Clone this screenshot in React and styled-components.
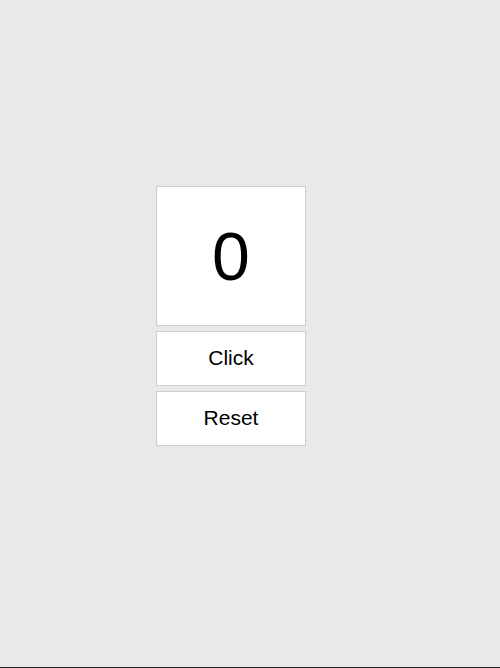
import React, { useState } from "react";
import styled, { createGlobalStyle } from "styled-components";

const GlobalStyle = createGlobalStyle`
  html, body {
    margin: 0;
    padding: 0;
    background: #e9e9e9;
  }
  body {
    font-family: "Liberation Sans", Arial, sans-serif;
  }
`;

const Page = styled.div`
  min-height: 668px;
  box-sizing: border-box;
  display: flex;
  flex-direction: column;
  border-bottom: 1px solid #222;
`;

const Main = styled.main`
  flex: 1;
  padding: 186px 0 0 156px;
`;

const Counter = styled.div`
  width: 150px;
  display: flex;
  flex-direction: column;
  gap: 5px;
`;

const Display = styled.div`
  height: 140px;
  box-sizing: border-box;
  background: #fff;
  border: 1px solid #cfcfcf;
  display: flex;
  align-items: center;
  justify-content: center;
  font-size: 68px;
  color: #000;
`;

const Button = styled.button`
  height: 55px;
  box-sizing: border-box;
  background: #fff;
  border: 1px solid #cfcfcf;
  font-family: "Liberation Sans", Arial, sans-serif;
  font-size: 21px;
  color: #000;
  padding: 0 0 2px;
  cursor: pointer;
`;

const App = () => {
  const [count, setCount] = useState(0);

  return (
    <>
      <GlobalStyle />
      <Page>
        <Main>
          <Counter>
            <Display>{count}</Display>
            <Button onClick={() => setCount(count + 1)}>Click</Button>
            <Button onClick={() => setCount(0)}>Reset</Button>
          </Counter>
        </Main>
      </Page>
    </>
  );
};

export default App;
